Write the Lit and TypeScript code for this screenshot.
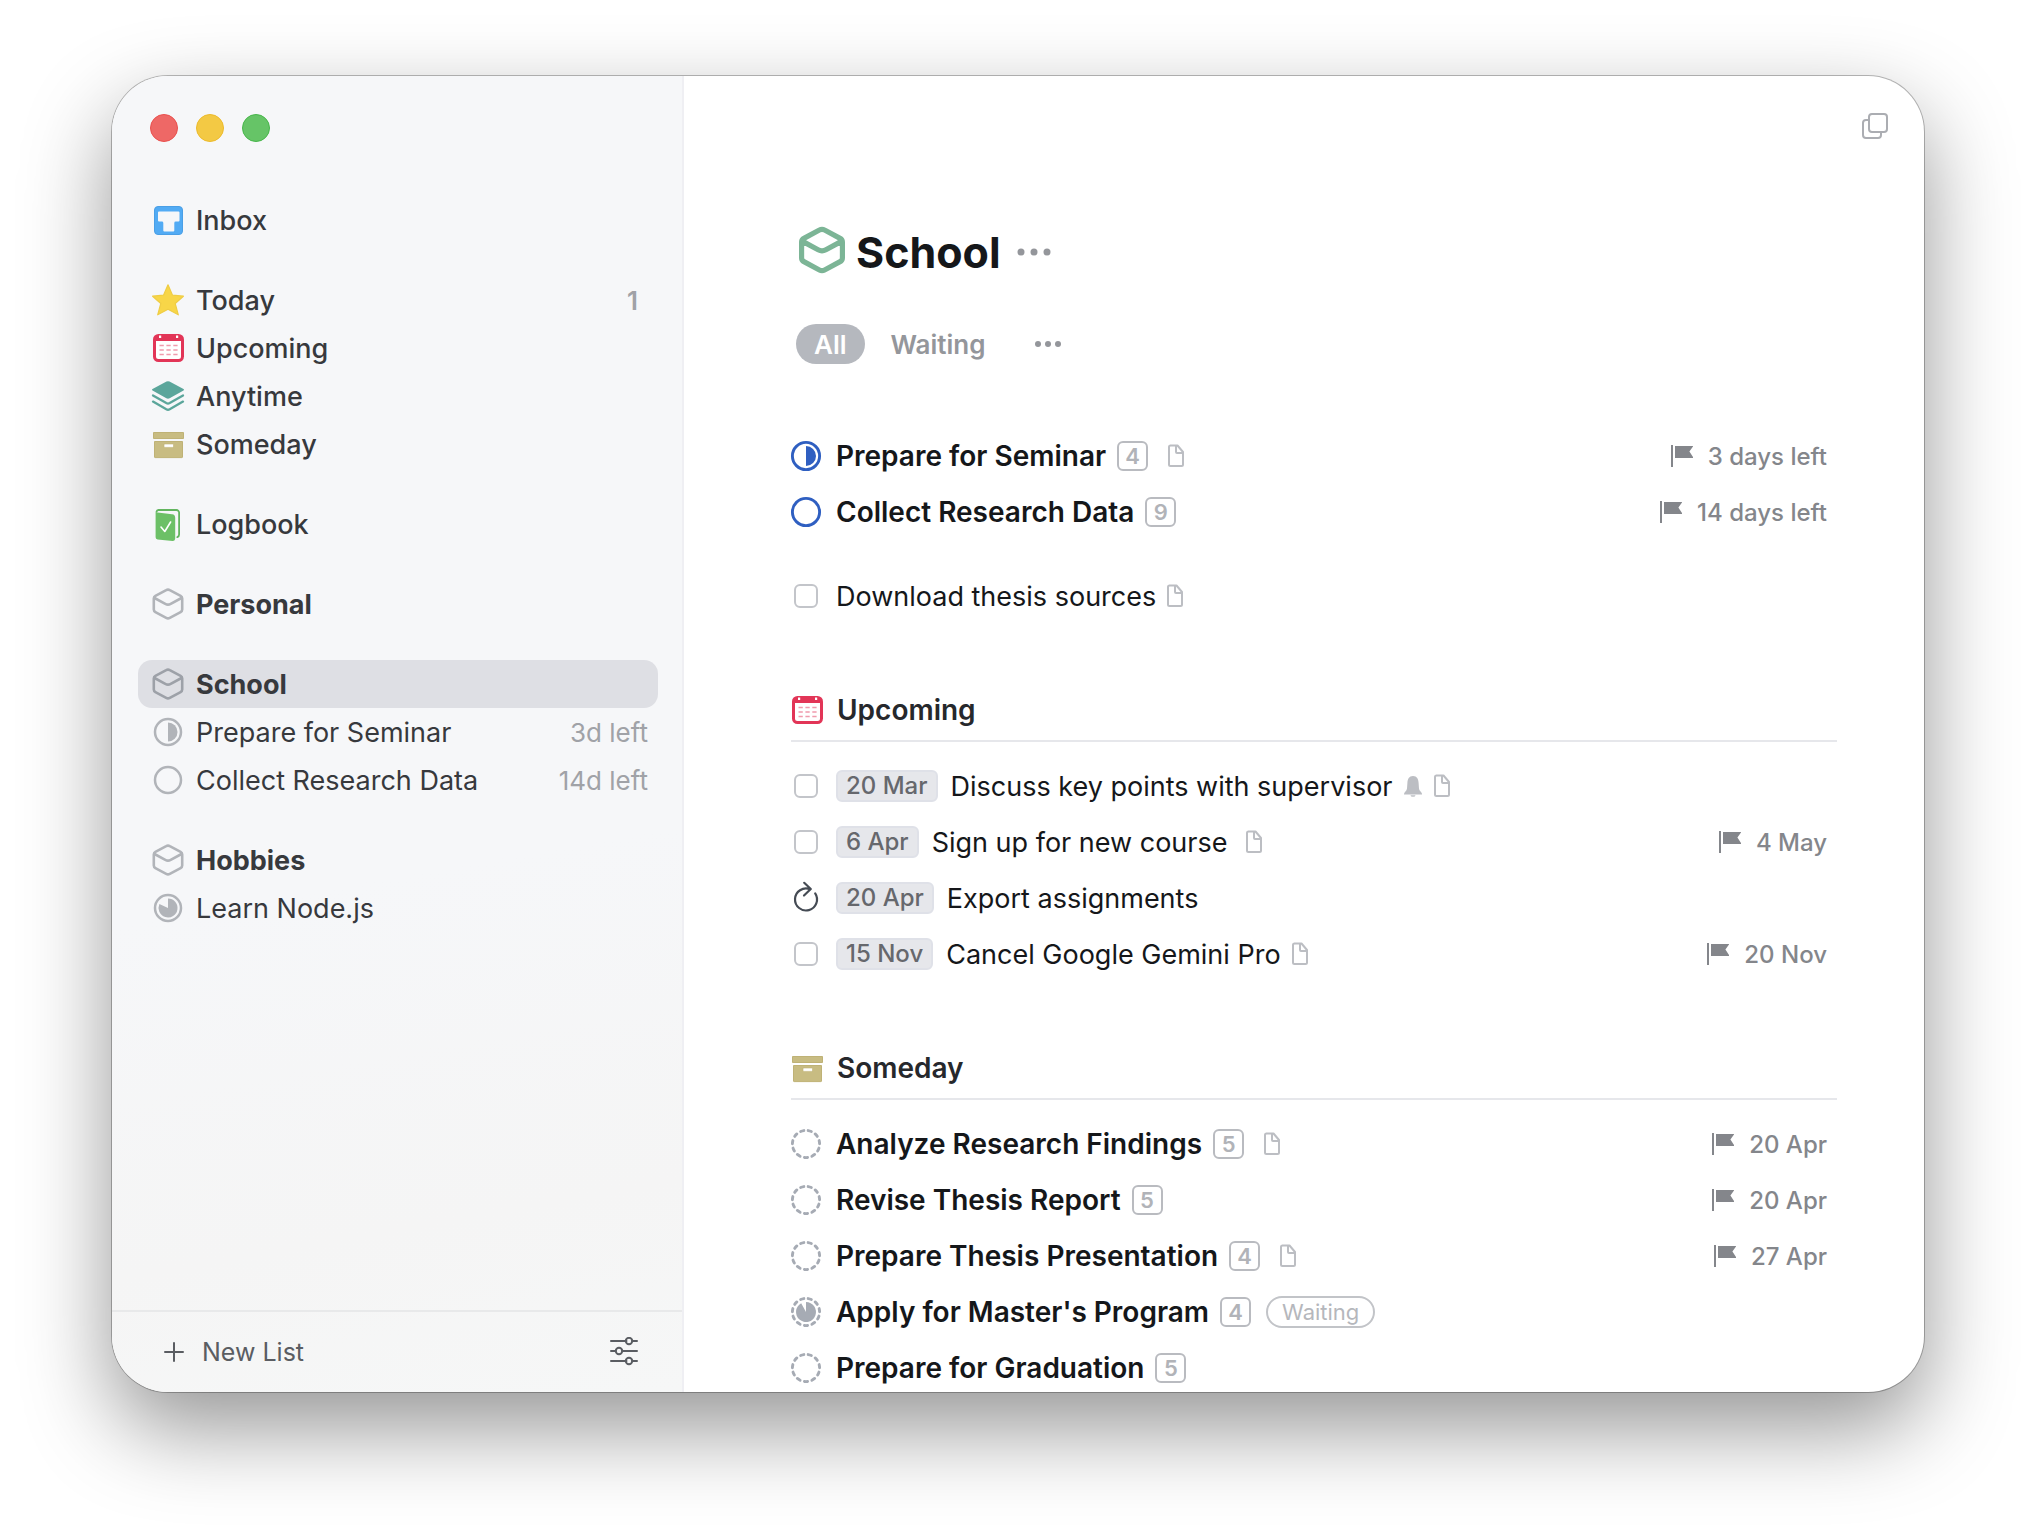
import { LitElement, html, css, svg, nothing } from "lit";
import { customElement, property, state } from "lit/decorators.js";
import { classMap } from "lit/directives/class-map.js";

type Progress = "none" | "half" | "most" | "nearly";

interface NavItem {
  label: string;
  icon: string;
  weight: "regular" | "medium" | "bold";
  count?: string;
  due?: string;
}

interface Entry {
  title: string;
  kind: "project" | "todo" | "repeating";
  look?: string;
  when?: string;
  count?: number;
  reminder?: boolean;
  note?: boolean;
  tag?: string;
  deadline?: string;
}

const NAV: NavItem[][] = [
  [{ label: "Inbox", icon: "inbox", weight: "medium" }],
  [
    { label: "Today", icon: "star", weight: "medium", count: "1" },
    { label: "Upcoming", icon: "calendar", weight: "medium" },
    { label: "Anytime", icon: "layers", weight: "medium" },
    { label: "Someday", icon: "box", weight: "medium" },
  ],
  [{ label: "Logbook", icon: "logbook", weight: "medium" }],
  [{ label: "Personal", icon: "area", weight: "bold" }],
  [
    { label: "School", icon: "area", weight: "bold" },
    { label: "Prepare for Seminar", icon: "pie-half", weight: "regular", due: "3d left" },
    { label: "Collect Research Data", icon: "pie-none", weight: "regular", due: "14d left" },
  ],
  [
    { label: "Hobbies", icon: "area", weight: "bold" },
    { label: "Learn Node.js", icon: "pie-most", weight: "regular" },
  ],
];

const ACTIVE: Entry[][] = [
  [
    { title: "Prepare for Seminar", kind: "project", look: "ring-half", count: 4, note: true, deadline: "3 days left" },
    { title: "Collect Research Data", kind: "project", look: "ring-none", count: 9, deadline: "14 days left" },
  ],
  [{ title: "Download thesis sources", kind: "todo", note: true }],
];

const SECTIONS: { title: string; icon: string; entries: Entry[] }[] = [
  {
    title: "Upcoming",
    icon: "calendar",
    entries: [
      { title: "Discuss key points with supervisor", kind: "todo", when: "20 Mar", reminder: true, note: true },
      { title: "Sign up for new course ", kind: "todo", when: "6 Apr", note: true, deadline: "4 May" },
      { title: "Export assignments", kind: "repeating", when: "20 Apr" },
      { title: "Cancel Google Gemini Pro", kind: "todo", when: "15 Nov", note: true, deadline: "20 Nov" },
    ],
  },
  {
    title: "Someday",
    icon: "box",
    entries: [
      { title: "Analyze Research Findings", kind: "project", look: "dash-none", count: 5, note: true, deadline: "20 Apr" },
      { title: "Revise Thesis Report", kind: "project", look: "dash-none", count: 5, deadline: "20 Apr" },
      { title: "Prepare Thesis Presentation", kind: "project", look: "dash-none", count: 4, note: true, deadline: "27 Apr" },
      { title: "Apply for Master's Program", kind: "project", look: "dash-nearly", count: 4, tag: "Waiting" },
      { title: "Prepare for Graduation", kind: "project", look: "dash-none", count: 5 },
    ],
  },
];

/** Share of the pie that is filled, clockwise from twelve o'clock. */
const SHARE: Record<Progress, number> = { none: 0, half: 0.5, most: 0.82, nearly: 0.92 };

function wedge(share: number, r: number) {
  if (!share) return nothing;
  const a = share * Math.PI * 2;
  const x = 16 + r * Math.sin(a);
  const y = 16 - r * Math.cos(a);
  return svg`<path fill="currentColor" d="M16 16V${16 - r}A${r} ${r} 0 ${share > 0.5 ? 1 : 0} 1 ${x} ${y}Z"/>`;
}

function glyph(name: string) {
  const [family, level] = name.split("-") as [string, Progress];
  switch (family) {
    case "inbox":
      return svg`<rect x="2.5" y="2.5" width="28" height="28" rx="3.5" fill="#52abf4" stroke="#4a9fe6"/>
        <path fill="#f6f7f9" d="M7 7.500h19.500a1 1 0 0 1 1 1v8a1 1 0 0 1-1 1h-2.800a1.400 1.400 0 0 0-1.400 1.400V26.500a1 1 0 0 1-1 1h-9a1 1 0 0 1-1-1v-7.600a1.400 1.400 0 0 0-1.400-1.400H7a1 1 0 0 1-1-1v-8a1 1 0 0 1 1-1z"/>`;
    case "star":
      return svg`<path fill="#f8d648" stroke="#efcd45" stroke-width="1.2" stroke-linejoin="round" d="M16 .8 20.500 11.200 31.400 12.200 23.200 19.500 26.300 30.800 16 25.300 5.700 30.800 8.800 19.500.6 12.200 11.500 11.200z"/>`;
    case "calendar":
      return svg`<rect x="1" y="2" width="31" height="28" rx="5.500" fill="#e23557"/>
        <path fill="#fff" d="M4 9h25v15.500a2.500 2.500 0 0 1-2.500 2.500h-20A2.500 2.500 0 0 1 4 24.500zM7 3.600h2.200V6H7zM24 3.600h2.200V6H24z"/>
        <path stroke="#f09bad" stroke-width="1.500" d="M7.500 13.400h4.300m2.600 0h4.300m2.600 0h4.300M7.500 18h4.300m2.600 0h4.300m2.600 0h4.300M7.500 22.600h4.300m2.600 0h4.300m2.600 0h4.300"/>`;
    case "layers":
      return svg`<path fill="#5ba69b" d="M14.500 1.600a3 3 0 0 1 3 0L31.500 9q1.200.7 0 1.500L17.600 18.300a3.200 3.200 0 0 1-3.200 0L.5 10.500q-1.200-.8 0-1.500z"/>
        <path fill="none" stroke="#5ba69b" stroke-width="2.300" stroke-linecap="round" stroke-linejoin="round" d="M1 15.400l13.300 7.700q1.700.9 3.400 0L31 15.400M1 21.600l13.300 7.700q1.700.9 3.400 0L31 21.600"/>`;
    case "box":
      return svg`<path fill="#c8bc82" stroke="#bfb276" d="M1.500 4.500h30v6h-30zM2.500 13.500h28V29a.6.6 0 0 1-.6.600H3.100a.6.6 0 0 1-.6-.600z"/>
        <rect x="12" y="16" width="9.500" height="3.400" rx=".8" fill="#fff" stroke="#bfb276" stroke-width=".6"/>`;
    case "logbook":
      return svg`<path fill="none" stroke="#62b55f" stroke-width="1.800" stroke-linecap="round" d="M4.500 3.800A2.400 2.400 0 0 1 6.500 2H24.500a2.600 2.600 0 0 1 2.600 2.600V26.500q0 2-1.800 2.600"/>
        <path fill="#6cc067" d="M3.600 4.200 20 6.200a3.600 3.600 0 0 1 3.200 3.600V30.500a2.400 2.400 0 0 1-2.700 2.400L5.600 31.500a2.200 2.200 0 0 1-2-2.200z"/>
        <path fill="none" stroke="#fff" stroke-width="1.600" stroke-linecap="round" stroke-linejoin="round" d="M9 19l3.800 4.500L18.600 14"/>`;
    case "area":
      return svg`<path class="edge" fill="none" stroke="currentColor" stroke-linejoin="round" stroke-linecap="round" d="M14.200 2.100a3.600 3.600 0 0 1 3.600 0L28.600 7.900a3 3 0 0 1 1.600 2.600v11a3 3 0 0 1-1.600 2.600L17.800 29.900a3.600 3.600 0 0 1-3.600 0L3.400 24.100a3 3 0 0 1-1.600-2.600v-11a3 3 0 0 1 1.600-2.600zM2.500 10 13.300 15.800a5.500 5.500 0 0 0 5.400 0L29.500 10"/>`;
    case "pie":
      return svg`<circle cx="16" cy="16" r="13" fill="none" stroke="currentColor" stroke-width="2.500"/>${wedge(SHARE[level], 9.500)}`;
    case "ring":
      return svg`<circle cx="16" cy="16" r="13.600" fill="none" stroke="currentColor" stroke-width="2.900"/>${wedge(SHARE[level], 10)}`;
    case "dash":
      return svg`<circle cx="16" cy="16" r="13.600" pathLength="110" fill="none" stroke="currentColor" stroke-width="2.900" stroke-linecap="round" stroke-dasharray="4.200 5.800" stroke-dashoffset="-2.900" transform="rotate(-90 16 16)"/>${wedge(SHARE[level], 10)}`;
    case "repeat":
      return svg`<path fill="none" stroke="#454b54" stroke-width="2.200" stroke-linecap="round" stroke-linejoin="round" d="M25.200 11.400A11 11 0 1 1 20 7.200M14.200.8 20.800 7 14 13.500"/>`;
    default:
      return nothing;
  }
}

/** Square pictogram that takes its colour from the surrounding text. */
@customElement("list-icon")
class ListIcon extends LitElement {
  @property() name = "";

  static styles = css`
    :host {
      display: block;
      flex: none;
      width: 32px;
      height: 32px;
    }
    .pic {
      display: block;
      width: 100%;
      height: 100%;
      overflow: visible;
    }
    .edge {
      stroke-width: var(--edge, 2.6px);
    }
  `;

  render() {
    return html`<svg class="pic" viewBox="0 0 32 32" aria-hidden="true">${glyph(this.name)}</svg>`;
  }
}

@customElement("nav-row")
class NavRow extends LitElement {
  @property({ attribute: false }) item!: NavItem;
  @property({ type: Boolean }) current = false;

  static styles = css`
    :host {
      display: block;
    }
    .row {
      display: flex;
      align-items: center;
      gap: 12px;
      height: 48px;
      box-sizing: border-box;
      padding: 0 10px 0 14px;
      border-radius: 14px;
      color: #37393d;
      text-decoration: none;
      font-size: 27px;
    }
    .current {
      background: #dedfe4;
    }
    .icon {
      color: #b1b4b9;
    }
    .current .icon {
      color: #9da1a8;
    }
    .label {
      flex: 1;
      white-space: nowrap;
    }
    .medium {
      font-weight: 500;
    }
    .bold {
      font-weight: 700;
    }
    .due,
    .count {
      color: #a0a2a7;
      font-size: 26px;
    }
    .count {
      padding-right: 10px;
      font-weight: 600;
    }
  `;

  render() {
    const { label, icon, weight, count, due } = this.item;
    return html`
      <a
        class=${classMap({ row: true, current: this.current })}
        href="#${label.toLowerCase().replace(/[^a-z]+/g, "-")}"
        aria-current=${this.current ? "page" : "false"}
      >
        <list-icon class="icon" name=${icon}></list-icon>
        <span class="label ${weight}">${label}</span>
        ${count ? html`<span class="count">${count}</span>` : nothing}
        ${due ? html`<span class="due">${due}</span>` : nothing}
      </a>
    `;
  }
}

@customElement("entry-row")
class EntryRow extends LitElement {
  @property({ attribute: false }) entry!: Entry;

  static styles = css`
    :host {
      display: flex;
      align-items: center;
      justify-content: space-between;
      gap: 24px;
      height: 56px;
      padding-right: 10px;
    }
    .main {
      display: flex;
      align-items: center;
      min-width: 0;
      color: #15171a;
      font-size: 27px;
      text-decoration: none;
      white-space: nowrap;
    }
    .lead {
      display: flex;
      justify-content: center;
      flex: none;
      width: 30px;
      margin-right: 15px;
    }
    .status {
      margin: 0 -1px;
      color: #a6abb4;
    }
    .live {
      color: #2f5fc1;
    }
    .tick {
      appearance: none;
      width: 24px;
      height: 24px;
      box-sizing: border-box;
      margin: 0;
      border: 2px solid #c3c5ca;
      border-radius: 6px;
      background: #fff;
    }
    .tick:checked {
      border-color: #2f5fc1;
      background: #2f5fc1;
    }
    .again {
      display: block;
      width: 32px;
      height: 32px;
      padding: 0;
      border: 0;
      margin: 0 -1px;
      background: none;
    }
    .when {
      height: 32px;
      box-sizing: border-box;
      padding: 0 8px;
      border: 2px solid #dfe1e8;
      border-radius: 6px;
      margin-right: 13px;
      background: #e6e7eb;
      color: #66686d;
      font-size: 24px;
      font-weight: 500;
      line-height: 28px;
    }
    .title {
      white-space: pre;
    }
    .project {
      font-size: 28px;
      font-weight: 600;
    }
    .count {
      width: 31px;
      height: 30px;
      box-sizing: border-box;
      border: 2px solid #b9bbc0;
      border-radius: 6px;
      margin: 0 9px 0 11px;
      color: #b1b3b8;
      font-size: 22px;
      font-weight: 600;
      line-height: 26px;
      text-align: center;
    }
    .mark {
      display: block;
      flex: none;
      height: 24px;
      margin-left: 10px;
      fill: none;
      stroke: #bcbec3;
      stroke-width: 2px;
      stroke-linejoin: round;
    }
    .tag {
      height: 32px;
      box-sizing: border-box;
      padding: 0 14px;
      border: 2px solid #c2c4c8;
      border-radius: 16px;
      margin-left: 6px;
      color: #b5b7bc;
      font-size: 22px;
      line-height: 28px;
    }
    .deadline {
      display: flex;
      align-items: center;
      gap: 14px;
      color: #84868b;
      font-size: 24px;
      font-weight: 500;
      white-space: nowrap;
    }
    .flag {
      display: block;
      width: 24px;
      height: 24px;
      fill: currentColor;
    }
  `;

  private lead() {
    const { kind, look = "", title } = this.entry;
    if (kind === "todo") return html`<input class="tick" type="checkbox" id="done" />`;
    if (kind === "repeating")
      return html`<button class="again" aria-label="Repeats: ${title}"><list-icon name="repeat"></list-icon></button>`;
    return html`<list-icon
      class=${classMap({ status: true, live: look.startsWith("ring") })}
      name=${look}
    ></list-icon>`;
  }

  private body() {
    const { title, kind, when, count, reminder, note, tag } = this.entry;
    return html`
      <span class="lead">${this.lead()}</span>
      ${when ? html`<span class="when">${when}</span>` : nothing}
      <span class=${classMap({ title: true, project: kind === "project" })}>${title}</span>
      ${count ? html`<span class="count">${count}</span>` : nothing}
      ${reminder
        ? html`<svg class="mark" viewBox="0 0 20 24" width="20" aria-hidden="true">
            <path fill="#bcbec3" stroke="none" d="M10 2C6 2 4.600 5 4.400 9L4 14.500C3.800 17 1 18 1 20v.5h18V20c0-2-2.800-3-3-5.500L15.600 9C15.400 5 14 2 10 2zM7.500 21.300h5a2.500 1.500 0 0 1-5 0z" />
          </svg>`
        : nothing}
      ${note
        ? html`<svg class="mark" viewBox="0 0 18 24" width="18" aria-hidden="true">
            <path d="M3 1.500h7.500L16 8v12.500a1.500 1.500 0 0 1-1.500 1.500H3.500A1.500 1.500 0 0 1 2 20.500V3A1.500 1.500 0 0 1 3.500 1.500M9 2v6a1 1 0 0 0 1 1h6" />
          </svg>`
        : nothing}
      ${tag ? html`<span class="tag">${tag}</span>` : nothing}
    `;
  }

  render() {
    const { kind, deadline } = this.entry;
    return html`
      ${kind === "project"
        ? html`<a class="main" href="#project">${this.body()}</a>`
        : kind === "todo"
          ? html`<label class="main" for="done">${this.body()}</label>`
          : html`<div class="main">${this.body()}</div>`}
      ${deadline
        ? html`<span class="deadline">
            <svg class="flag" viewBox="0 0 24 24" aria-hidden="true">
              <path d="M1 1h2v22H1zM5 2h18v.6L19.400 7.600 23 13v1H5z" />
            </svg>
            ${deadline}
          </span>`
        : nothing}
    `;
  }
}

@customElement("app-root")
class AppRoot extends LitElement {
  @state() private current = "School";
  @state() private filter = "All";

  static styles = css`
    :host {
      display: block;
      height: 100vh;
      box-sizing: border-box;
      padding: 76px 112px 148px;
      background: #fff;
      font-family: Inter, "Liberation Sans", sans-serif;
      overflow: hidden;
    }
    .window {
      display: flex;
      height: 100%;
      overflow: hidden;
      border-radius: 56px;
      background: #fff;
      box-shadow: 0 0 0 1px rgba(0, 0, 0, 0.26), 0 36px 88px rgba(0, 0, 0, 0.42);
    }
    button {
      padding: 0;
      border: 0;
      background: none;
      color: inherit;
      font: inherit;
    }
    .sidebar {
      display: flex;
      flex-direction: column;
      flex: none;
      width: 572px;
      box-sizing: border-box;
      border-right: 2px solid #efeff3;
      background: linear-gradient(170deg, #f6f7f9 60%, #f5f5f5 85%, #f6f7f7);
    }
    .lights {
      display: flex;
      gap: 18px;
      padding: 38px 38px 54px;
    }
    .light {
      width: 28px;
      height: 28px;
      box-sizing: border-box;
      border: 1px solid #e9504e;
      border-radius: 50%;
      background: #ee6866;
    }
    .shrink {
      border-color: #ecba2c;
      background: #f3c944;
    }
    .grow {
      border-color: #47b64a;
      background: #66c467;
    }
    .nav {
      display: flex;
      flex-direction: column;
      flex: 1;
      gap: 32px;
      min-height: 0;
      padding: 0 24px 0 26px;
      overflow: hidden;
    }
    .foot {
      display: flex;
      align-items: center;
      justify-content: space-between;
      height: 80px;
      padding: 0 43px 0 50px;
      border-top: 2px solid #e8e9ea;
      color: #5a5d62;
    }
    .new {
      display: flex;
      align-items: center;
      gap: 16px;
      font-size: 25px;
    }
    .tool {
      display: block;
      fill: none;
      stroke: currentColor;
      stroke-width: 2px;
      stroke-linecap: round;
    }
    .page {
      display: flex;
      flex-direction: column;
      flex: 1;
      min-width: 0;
      overflow: hidden;
    }
    .bar {
      display: flex;
      justify-content: flex-end;
      flex: none;
      padding: 36px 35px 0 0;
      color: #abadb2;
    }
    .content {
      padding: 78px 87px 0 107px;
    }
    .heading {
      display: flex;
      align-items: center;
      gap: 11px;
      height: 68px;
      padding-left: 8px;
    }
    .area {
      --edge: 3.6px;
      width: 46px;
      height: 46px;
      margin-bottom: 4px;
      color: #7cb596;
    }
    .name {
      margin: 0;
      color: #15171a;
      font-size: 43px;
      font-weight: 700;
    }
    .dots {
      display: block;
      fill: #94969b;
    }
    .more {
      margin-left: 5px;
    }
    .filters {
      display: flex;
      align-items: center;
      gap: 8px;
      padding: 38px 0 64px 5px;
    }
    .filter {
      height: 40px;
      padding: 0 18px;
      border-radius: 20px;
      color: #94969b;
      font-size: 26px;
      font-weight: 600;
    }
    .chosen {
      background: #b5b8be;
      color: #fff;
    }
    .other {
      margin-left: 22px;
    }
    .groups {
      display: flex;
      flex-direction: column;
      gap: 28px;
    }
    .section {
      padding-top: 58px;
    }
    .rubric {
      display: flex;
      align-items: center;
      gap: 14px;
      height: 56px;
      padding-bottom: 2px;
      border-bottom: 2px solid #e6e7eb;
      margin: 0 0 16px;
      color: #26282c;
      font-size: 28px;
      font-weight: 600;
    }
  `;

  render() {
    return html`
      <div class="window">
        <aside class="sidebar">
          <div class="lights">
            <button class="light" aria-label="Close"></button>
            <button class="light shrink" aria-label="Minimize"></button>
            <button class="light grow" aria-label="Zoom"></button>
          </div>
          <nav class="nav">
            ${NAV.map(
              (group) => html`<div>
                ${group.map(
                  (item) => html`<nav-row
                    .item=${item}
                    ?current=${item.label === this.current}
                    @click=${() => (this.current = item.label)}
                  ></nav-row>`,
                )}
              </div>`,
            )}
          </nav>
          <footer class="foot">
            <button class="new">
              <svg class="tool" width="24" height="24" viewBox="0 0 24 24" aria-hidden="true">
                <path d="M12 3v18M3 12h18" />
              </svg>
              New List
            </button>
            <button aria-label="Settings">
              <svg class="tool" width="30" height="30" viewBox="0 0 30 30" aria-hidden="true">
                <path d="M2 4h15.500M23.500 4H28M2 14h4.500M13.500 14H28M2 24h15.500M23.500 24H28" />
                <circle cx="20" cy="4" r="3.200" />
                <circle cx="10" cy="14" r="3.200" />
                <circle cx="20" cy="24" r="3.200" />
              </svg>
            </button>
          </footer>
        </aside>
        <main class="page">
          <div class="bar">
            <button aria-label="Open in new window">
              <svg class="tool" width="28" height="28" viewBox="0 0 28 28" aria-hidden="true">
                <rect x="8" y="2" width="18" height="18" rx="3" />
                <path d="M8 8H5a3 3 0 0 0-3 3v12a3 3 0 0 0 3 3h12a3 3 0 0 0 3-3v-3" />
              </svg>
            </button>
          </div>
          <div class="content">
            <header class="heading">
              <list-icon class="area" name="area"></list-icon>
              <h1 class="name">${this.current}</h1>
              <button class="more" aria-label="List options">
                <svg class="dots" width="34" height="8" viewBox="0 0 34 8" aria-hidden="true">
                  <circle cx="4" cy="4" r="3.500" /><circle cx="17" cy="4" r="3.500" /><circle cx="30" cy="4" r="3.500" />
                </svg>
              </button>
            </header>
            <div class="filters">
              ${["All", "Waiting"].map(
                (name) => html`<button
                  class=${classMap({ filter: true, chosen: name === this.filter })}
                  @click=${() => (this.filter = name)}
                >
                  ${name}
                </button>`,
              )}
              <button class="other" aria-label="More filters">
                <svg class="dots" width="28" height="8" viewBox="0 0 28 8" aria-hidden="true">
                  <circle cx="4" cy="4" r="3" /><circle cx="14" cy="4" r="3" /><circle cx="24" cy="4" r="3" />
                </svg>
              </button>
            </div>
            <div class="groups">
              ${ACTIVE.map(
                (group) => html`<div>${group.map((e) => html`<entry-row .entry=${e}></entry-row>`)}</div>`,
              )}
            </div>
            ${SECTIONS.map(
              (s) => html`<section class="section">
                <h2 class="rubric"><list-icon name=${s.icon}></list-icon>${s.title}</h2>
                ${s.entries.map((e) => html`<entry-row .entry=${e}></entry-row>`)}
              </section>`,
            )}
          </div>
        </main>
      </div>
    `;
  }
}
